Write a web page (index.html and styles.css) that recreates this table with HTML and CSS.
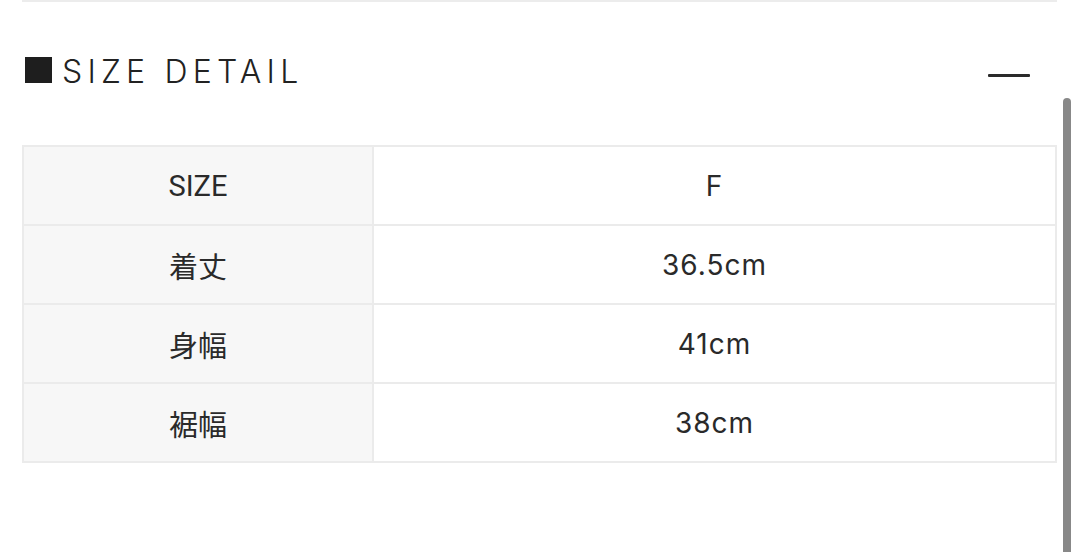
FILE: index.html
```html
<!DOCTYPE html>
<html lang="ja">
<head>
<meta charset="utf-8">
<title>SIZE DETAIL</title>
<link rel="stylesheet" href="styles.css">
</head>
<body>
<div class="page">
  <div class="topline"></div>
  <div class="header">
    <div class="title"><span class="square"></span><span class="title-text">SIZE DETAIL</span></div>
    <span class="minus" aria-label="collapse"></span>
  </div>
  <table class="size-table">
    <tr><th>SIZE</th><td>F</td></tr>
    <tr><th>着丈</th><td>36.5cm</td></tr>
    <tr><th>身幅</th><td>41cm</td></tr>
    <tr><th>裾幅</th><td>38cm</td></tr>
  </table>
</div>
<div class="scrollbar"></div>
</body>
</html>
```

FILE: styles.css
```css
html, body {
  margin: 0;
  padding: 0;
  background: #fff;
  overflow: hidden;
}
body {
  width: 1080px;
  height: 552px;
  position: relative;
  font-family: Inter, "Noto Sans CJK JP", sans-serif;
  color: #222;
}
.page {
  padding: 0 23px 0 22px;
}
.topline {
  height: 2px;
  background: #ececec;
}
.header {
  display: flex;
  justify-content: space-between;
  align-items: center;
  padding: 55px 27px 62px 3px;
}
.title {
  display: flex;
  align-items: center;
  height: 26px;
}
.square {
  width: 27px;
  height: 26px;
  background: #1e1e1e;
  margin-right: 10px;
}
.title-text {
  font-family: Inter, sans-serif;
  font-weight: 300;
  font-size: 32px;
  letter-spacing: 5.2px;
  line-height: 26px;
  padding-top: 3px;
  color: #222;
}
.minus {
  width: 42px;
  height: 3px;
  background: #2a2a2a;
  border-radius: 1px;
  margin-top: 11px;
}
.size-table {
  width: 100%;
  border-collapse: collapse;
  border: 2px solid #ebebeb;
}
.size-table th,
.size-table td {
  border: 2px solid #ebebeb;
  height: 77px;
  padding: 0;
  text-align: center;
  vertical-align: middle;
}
.size-table th {
  width: 348px;
  background: #f7f7f7;
  font-family: Roboto, "Noto Sans CJK JP", sans-serif;
  font-weight: 400;
  font-size: 29px;
  color: #2a2a2a;
}
.size-table td {
  background: #fff;
  font-family: Inter, "Noto Sans CJK JP", sans-serif;
  font-weight: 400;
  font-size: 28px;
  letter-spacing: 1px;
  color: #2a2a2a;
}
.scrollbar {
  position: absolute;
  left: 1063px;
  top: 98px;
  width: 8px;
  height: 460px;
  background: #888;
  border-radius: 4px;
}
```
